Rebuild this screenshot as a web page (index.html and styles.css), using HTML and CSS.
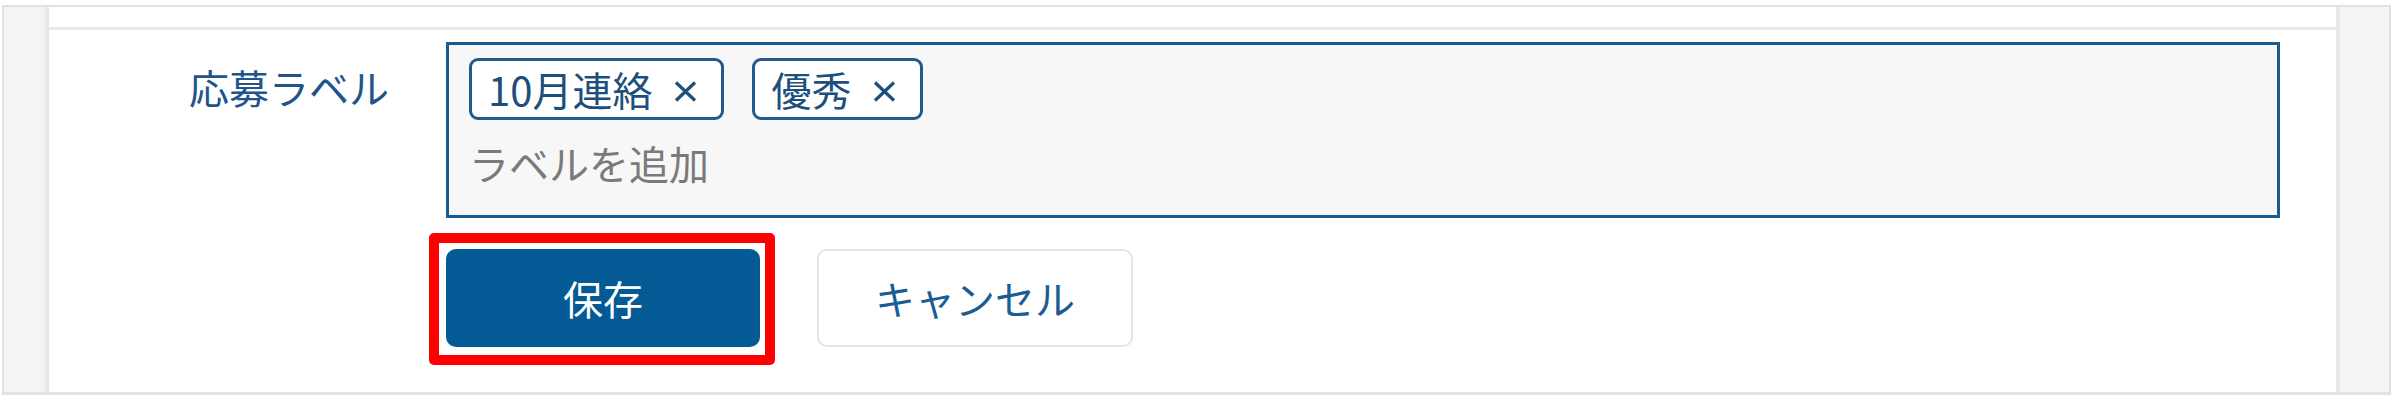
FILE: index.html
```html
<!DOCTYPE html>
<html lang="ja">
<head>
<meta charset="utf-8">
<title>応募ラベル</title>
<link rel="stylesheet" href="styles.css">
</head>
<body>
<div class="frame">
  <aside class="side side-left"></aside>
  <main class="main">
    <div class="topstrip"></div>
    <section class="form-row">
      <div class="label">応募ラベル</div>
      <div class="field">
        <div class="tagbox">
          <div class="tags">
            <span class="tag"><span class="tag-text">10月連絡</span><svg class="tag-x" viewBox="0 0 23 21" width="23" height="21"><path d="M2 1.5 L21 19.5 M21 1.5 L2 19.5" /></svg></span>
            <span class="tag"><span class="tag-text">優秀</span><svg class="tag-x" viewBox="0 0 23 21" width="23" height="21"><path d="M2 1.5 L21 19.5 M21 1.5 L2 19.5" /></svg></span>
          </div>
          <div class="placeholder">ラベルを追加</div>
        </div>
        <div class="actions">
          <button class="btn btn-primary highlighted">保存</button>
          <button class="btn btn-secondary">キャンセル</button>
        </div>
      </div>
    </section>
  </main>
  <aside class="side side-right"></aside>
</div>
</body>
</html>
```
FILE: styles.css
```css
* { box-sizing: border-box; }
html, body { margin: 0; padding: 0; background: #ffffff; }
body {
  font-family: "Noto Sans CJK JP", "Noto Sans", sans-serif;
  width: 2397px;
  height: 398px;
  overflow: hidden;
}
.frame {
  margin: 5px 0 0 2px;
  width: 2389px;
  height: 390px;
  border: 2px solid #e2e2e2;
  border-bottom-width: 3px;
  display: flex;
}
.side {
  background: #f4f4f4;
}
.side-left {
  width: 45px;
  border-right: 4px solid #e8e8e8;
}
.side-right {
  width: 53px;
  border-left: 4px solid #e8e8e8;
}
.main {
  flex: 1;
  display: flex;
  flex-direction: column;
  background: #ffffff;
}
.topstrip {
  height: 23px;
  border-bottom: 3px solid #e8e8e8;
}
.form-row {
  display: grid;
  grid-template-columns: 341px 1fr;
  column-gap: 56px;
  padding: 12px 56px 0 0;
}
.label {
  text-align: right;
  font-size: 40px;
  line-height: 60px;
  padding-top: 15px;
  color: #21548a;
  padding-right: 1px;
}
.field {
  display: flex;
  flex-direction: column;
}
.tagbox {
  border: 3px solid #1a5b92;
  background: #f7f7f7;
  padding: 13px 20px 19px 20px;
  height: 176px;
}
.tags {
  display: flex;
  gap: 28px;
}
.tag {
  display: inline-flex;
  align-items: center;
  height: 62px;
  border: 3px solid #245a8b;
  border-radius: 9px;
  background: #ffffff;
  padding: 0 24px 0 16px;
  color: #1d4f7c;
  font-size: 40px;
  line-height: 48px;
}
.tag-x {
  margin-left: 22px;
  margin-top: 4px;
  fill: none;
  stroke: #1d4f7c;
  stroke-width: 3.2;
  stroke-linecap: butt;
}
.placeholder {
  margin-top: 13px;
  font-size: 40px;
  line-height: 60px;
  color: #7a7a7a;
}
.actions {
  display: flex;
  gap: 57px;
  margin-top: 31px;
}
.btn {
  font-family: inherit;
  font-size: 40px;
  line-height: 48px;
  height: 98px;
  border-radius: 10px;
  padding: 0;
  cursor: pointer;
}
.btn-primary {
  width: 314px;
  background: #035a94;
  border: none;
  color: #ffffff;
}
.btn-secondary {
  width: 316px;
  background: #ffffff;
  border: 2px solid #dce6ef;
  color: #1a5c94;
}
.highlighted {
  position: relative;
}
.highlighted::after {
  content: "";
  position: absolute;
  top: -16px;
  left: -17px;
  right: -15px;
  bottom: -18px;
  border: 10px solid #ff0000;
  border-radius: 5px;
  pointer-events: none;
}
```
